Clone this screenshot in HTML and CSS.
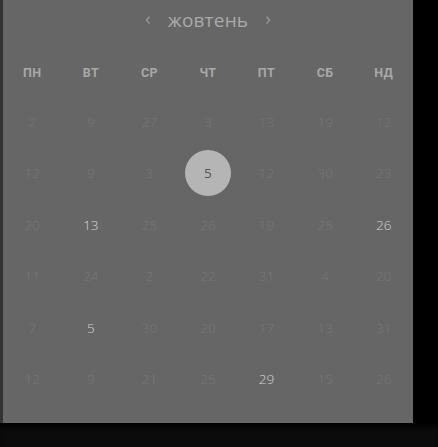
FILE: index.html
```html
<!DOCTYPE html>
<html lang="uk">
<head>
<meta charset="utf-8">
<link rel="stylesheet" href="styles.css">
</head>
<body>
<div class="screen">
  <div class="top">
    <div class="edge"></div>
    <div class="panel">
      <div class="title">
        <span class="chev">‹</span>
        <span class="month">жовтень</span>
        <span class="chev">›</span>
      </div>
      <div class="weekdays">
        <span>ПН</span><span>ВТ</span><span>СР</span><span>ЧТ</span><span>ПТ</span><span>СБ</span><span>НД</span>
      </div>
      <div class="days">
        <span>2</span><span>9</span><span>27</span><span>3</span><span>13</span><span>19</span><span>12</span>
        <span>12</span><span>9</span><span>3</span><span class="sel"><b>5</b></span><span>12</span><span>30</span><span>23</span>
        <span>20</span><span class="on">13</span><span>25</span><span>26</span><span>19</span><span>25</span><span class="on">26</span>
        <span>11</span><span>24</span><span>2</span><span>22</span><span>31</span><span>4</span><span>20</span>
        <span>7</span><span class="on">5</span><span>30</span><span>20</span><span>17</span><span>13</span><span>31</span>
        <span>12</span><span>9</span><span>21</span><span>25</span><span class="on">29</span><span>15</span><span>26</span>
      </div>
    </div>
  </div>
  <div class="footer"></div>
</div>
</body>
</html>
```

FILE: styles.css
```css
html, body {
  margin: 0;
  padding: 0;
  background: #000;
}
body {
  width: 438px;
  height: 447px;
  overflow: hidden;
  font-family: "Open Sans", "Noto Sans", sans-serif;
}
.screen {
  display: flex;
  flex-direction: column;
  height: 447px;
}
.top {
  display: flex;
  height: 423px;
}
.edge {
  width: 3px;
  background: #333;
}
.panel {
  width: 410px;
  background: #666;
}
.title {
  height: 40px;
  display: flex;
  align-items: center;
  justify-content: center;
  gap: 17px;
}
.month {
  font-size: 19px;
  color: #aaa;
  letter-spacing: 0.2px;
}
.chev {
  font-size: 19px;
  color: #999;
  line-height: 1;
  margin-top: -3px;
}
.weekdays {
  margin-top: 8px;
  height: 48px;
  display: grid;
  grid-template-columns: repeat(7, 1fr);
  align-items: center;
  justify-items: center;
  font-family: Roboto, "Noto Sans", sans-serif;
  font-size: 12.5px;
  font-weight: 700;
  color: #a8a8a8;
  letter-spacing: 0.4px;
}
.days {
  display: grid;
  grid-template-columns: repeat(7, 1fr);
  grid-auto-rows: 51.4px;
  align-items: center;
  justify-items: center;
  font-size: 13.5px;
  font-weight: 300;
  color: #777;
  margin-top: 0.4px;
}
.days .on {
  color: #d4d4d4;
}
.days .sel {
  width: 46px;
  height: 46px;
  border-radius: 50%;
  background: #b5b5b5;
  display: flex;
  align-items: center;
  justify-content: center;
  color: #555;
}
.days .sel b {
  font-weight: 400;
}
.footer {
  flex: 1;
  background: #0b0b0b;
  box-shadow: inset 0 6px 6px -3px #000;
}
```
